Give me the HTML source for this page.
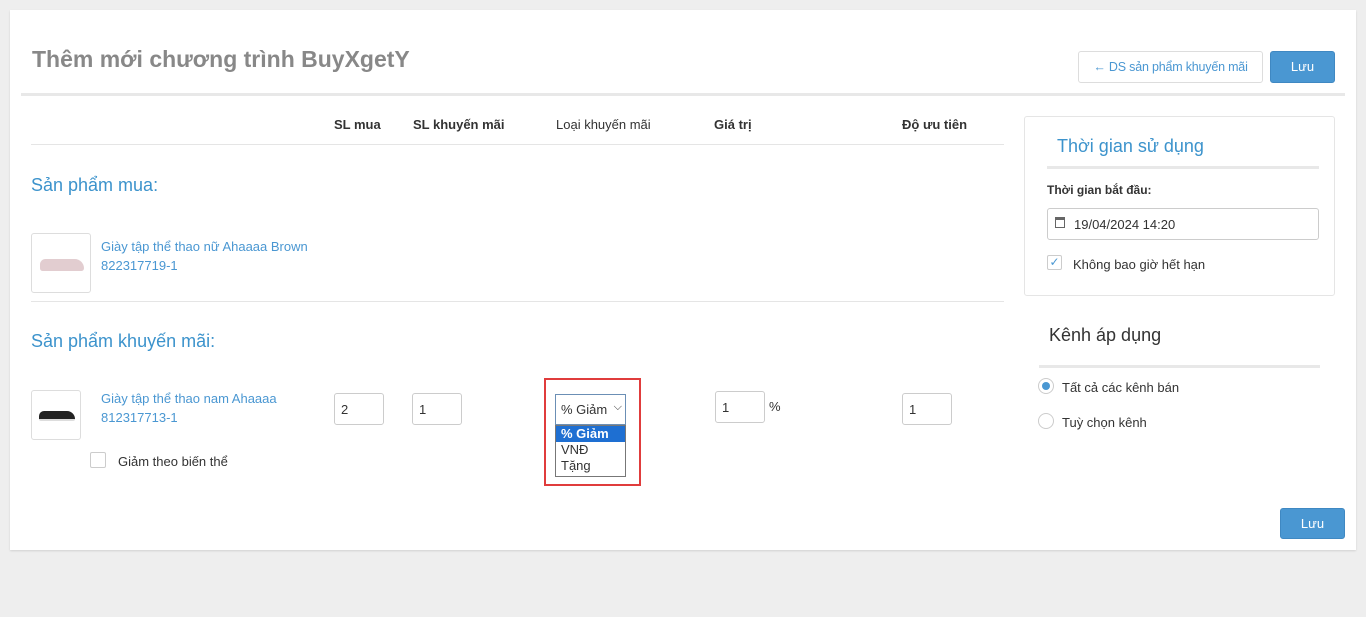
<!DOCTYPE html>
<html><head><meta charset="utf-8"><style>
*{box-sizing:border-box;margin:0;padding:0}
body{width:1366px;height:617px;background:#eeeeee;font-family:"Liberation Sans",Arial,sans-serif;font-size:13px;color:#333;position:relative;overflow:hidden}
.card{position:absolute;left:10px;top:10px;width:1346px;height:540px;background:#fff;box-shadow:0 1px 2px rgba(0,0,0,.12)}
.a{position:absolute;white-space:nowrap}
.h1{left:32px;top:46px;font-size:23px;font-weight:bold;color:#888}
.btn{position:absolute;border-radius:3px;font-size:13px;text-align:center;white-space:nowrap}
.blue{background:#4a97d2;color:#fff;border:1px solid #3f88c2}
.th{top:117px;font-weight:bold;font-size:13px;color:#333}
.sec{font-size:18px;color:#3c93cc}
.link{color:#4a97d2;font-size:13px;line-height:19px}
.thumb{border:1px solid #ddd;border-radius:3px;background:#fff}
.inp{position:absolute;border:1px solid #ccc;border-radius:3px;height:32px;padding:8px 6px;font-size:13px}
.hr{position:absolute;height:1px;background:#e5e5e5}
</style></head><body>
<div class="card"></div>
<div class="a h1">Thêm mới chương trình BuyXgetY</div>
<div class="btn" style="left:1078px;top:51px;width:185px;height:32px;border:1px solid #ddd;color:#4a97d2;line-height:30px;font-size:12.5px;letter-spacing:-0.2px"><b>&#x2190;</b> DS sản phẩm khuyến mãi</div>
<div class="btn blue" style="left:1270px;top:51px;width:65px;height:32px;line-height:30px">Lưu</div>
<div class="a" style="left:21px;top:93px;width:1324px;height:3px;background:#e8e8e8"></div>

<div class="a th" style="left:334px">SL mua</div>
<div class="a th" style="left:413px">SL khuyến mãi</div>
<div class="a th" style="left:556px;font-weight:normal">Loại khuyến mãi</div>
<div class="a th" style="left:714px">Giá trị</div>
<div class="a th" style="left:902px">Độ ưu tiên</div>
<div class="hr" style="left:31px;top:144px;width:973px"></div>

<div class="a sec" style="left:31px;top:175px">Sản phẩm mua:</div>
<div class="a thumb" style="left:31px;top:233px;width:60px;height:60px"><div style="position:absolute;left:8px;top:25px;width:44px;height:12px;background:#e2cdd0;border-radius:6px 10px 3px 3px"></div></div>
<div class="a link" style="left:101px;top:237px">Giày tập thể thao nữ Ahaaaa Brown<br>822317719-1</div>
<div class="hr" style="left:31px;top:301px;width:973px"></div>

<div class="a sec" style="left:31px;top:331px">Sản phẩm khuyến mãi:</div>
<div class="a thumb" style="left:31px;top:390px;width:50px;height:50px"><div style="position:absolute;left:7px;top:20px;width:36px;height:10px;background:#222;border-radius:5px 8px 2px 2px;border-bottom:2px solid #ddd"></div></div>
<div class="a link" style="left:101px;top:389px">Giày tập thể thao nam Ahaaaa<br>812317713-1</div>
<div class="a" style="left:90px;top:452px;width:16px;height:16px;border:1px solid #ccc;border-radius:2px"></div>
<div class="a" style="left:118px;top:454px">Giảm theo biến thể</div>
<div class="inp" style="left:334px;top:393px;width:50px">2</div>
<div class="inp" style="left:412px;top:393px;width:50px">1</div>

<div class="a" style="left:544px;top:378px;width:97px;height:108px;border:2px solid #e03c3c"></div>
<div class="a" style="left:555px;top:394px;width:71px;height:31px;border:1px solid #6b8fb5;padding:7px 5px;font-size:13px">% Giảm<span style="position:absolute;right:3px;top:6px;font-size:11px">⌵</span></div>
<div class="a" style="left:555px;top:425px;width:71px;height:52px;border:1px solid #777;background:#fff;font-size:13px;line-height:16px">
<div style="background:#1e6fd2;color:#fff;padding-left:5px;font-weight:bold">% Giảm</div>
<div style="padding-left:5px">VNĐ</div><div style="padding-left:5px">Tặng</div></div>

<div class="inp" style="left:715px;top:391px;width:50px">1</div>
<div class="a" style="left:769px;top:399px">%</div>
<div class="inp" style="left:902px;top:393px;width:50px">1</div>

<div class="a" style="left:1024px;top:116px;width:311px;height:180px;border:1px solid #e5e5e5;border-radius:3px"></div>
<div class="a" style="left:1057px;top:136px;font-size:18px;color:#3c93cc">Thời gian sử dụng</div>
<div class="a" style="left:1047px;top:166px;width:272px;height:3px;background:#e8e8e8"></div>
<div class="a" style="left:1047px;top:183px;font-weight:bold;font-size:12px">Thời gian bắt đầu:</div>
<div class="inp" style="left:1047px;top:208px;width:272px;padding-left:26px">19/04/2024 14:20</div>
<div class="a" style="left:1055px;top:217px;width:10px;height:11px;border:1px solid #666;border-top:3px solid #666"></div>
<div class="a" style="left:1047px;top:255px;width:15px;height:15px;border:1px solid #ccc;border-radius:2px;color:#4a97d2;font-size:12px;line-height:13px;text-align:center">✓</div>
<div class="a" style="left:1073px;top:257px">Không bao giờ hết hạn</div>

<div class="a" style="left:1049px;top:325px;font-size:18px;color:#333">Kênh áp dụng</div>
<div class="a" style="left:1039px;top:365px;width:281px;height:3px;background:#e8e8e8"></div>
<div class="a" style="left:1038px;top:378px;width:16px;height:16px;border:1px solid #ccc;border-radius:50%"><div style="margin:3px;width:8px;height:8px;border-radius:50%;background:#4a97d2"></div></div>
<div class="a" style="left:1062px;top:380px">Tất cả các kênh bán</div>
<div class="a" style="left:1038px;top:413px;width:16px;height:16px;border:1px solid #ccc;border-radius:50%"></div>
<div class="a" style="left:1062px;top:415px">Tuỳ chọn kênh</div>

<div class="btn blue" style="left:1280px;top:508px;width:65px;height:31px;line-height:29px">Lưu</div>
</body></html>
